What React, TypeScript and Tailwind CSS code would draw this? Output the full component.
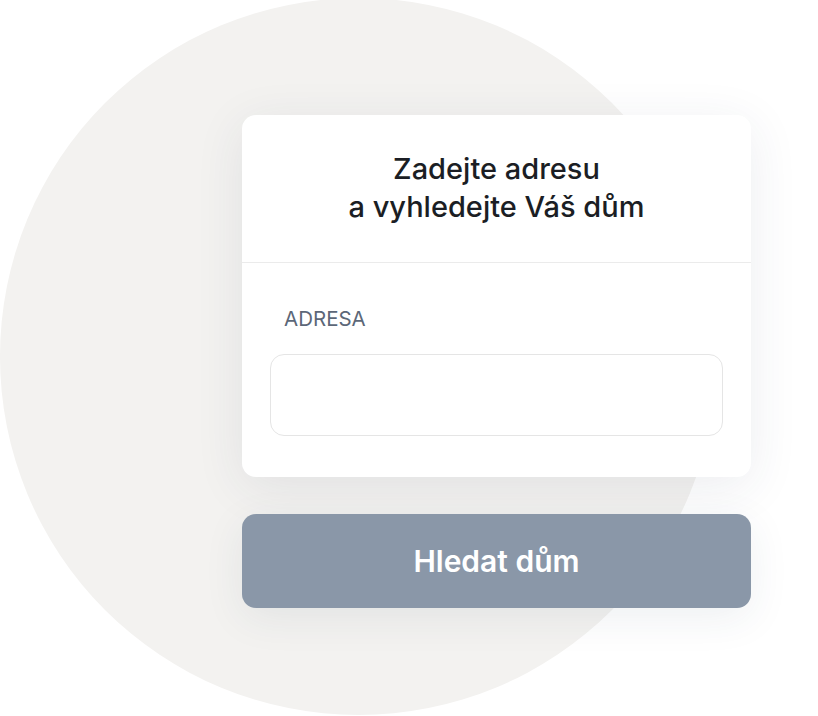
export default function App() {
  return (
    <div className="relative w-[818px] h-[716px] overflow-hidden bg-white font-['Inter',sans-serif]">
      {/* decorative backdrop circle */}
      <div className="absolute left-0 top-[-2px] w-[717px] h-[717px] rounded-full bg-[#f3f2f0]" />

      <div className="relative pt-[115px] pl-[242px] w-[751px]">
        <div className="bg-white rounded-[14px] shadow-[0_10px_50px_rgba(40,60,90,0.09)]">
          <div className="pt-[35px] pb-[36px] border-b-[1.5px] border-[#ebebeb]">
            <h1 className="text-center text-[29px] leading-[38px] font-medium text-[#1b1e24]">
              Zadejte adresu
              <br />a vyhledejte Váš dům
            </h1>
          </div>
          <div className="px-[28px] pt-[42px] pb-[41px]">
            <label className="block pl-[14px] text-[20.5px] leading-[28px] text-[#5c6778]">ADRESA</label>
            <input
              type="text"
              className="mt-[21px] block w-full h-[82px] rounded-[14px] border-[1.5px] border-[#e5e5e5] bg-white px-4 text-[20px] outline-none"
            />
          </div>
        </div>

        <button className="mt-[37px] w-full h-[94px] rounded-[14px] bg-[#8a97a8] text-white text-[30px] font-semibold shadow-[0_10px_40px_rgba(40,60,90,0.08)]">
          Hledat dům
        </button>
      </div>
    </div>
  )
}
